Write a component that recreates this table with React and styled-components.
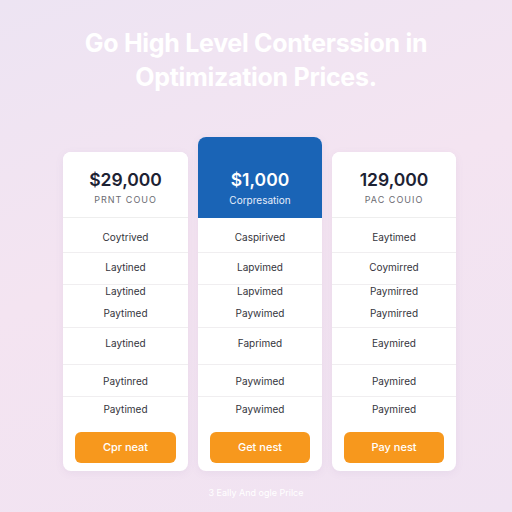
import React from "react";
import styled, { createGlobalStyle } from "styled-components";

const GlobalStyle = createGlobalStyle`
  html, body {
    margin: 0;
    padding: 0;
  }
  body {
    width: 512px;
    height: 512px;
    overflow: hidden;
    font-family: Inter, "Open Sans", "Liberation Sans", sans-serif;
    background: linear-gradient(160deg, #ede4f3 0%, #f4e4f1 45%, #f0e3f2 100%);
  }
`;

// row heights / text offsets, same for every card
const rows = [
  { h: 35, pt: 13, line: true },
  { h: 32, pt: 8, line: true },
  { h: 17, pt: 0, line: false },
  { h: 26, pt: 5, line: true },
  { h: 37, pt: 9, line: true },
  { h: 32, pt: 10, line: true },
  { h: 28, pt: 6, line: false },
];

const plans = [
  {
    price: "$29,000",
    label: "PRNT COUO",
    featured: false,
    width: 125,
    items: ["Coytrived", "Laytined", "Laytined", "Paytimed", "Laytined", "Paytinred", "Paytimed"],
    cta: "Cpr neat",
  },
  {
    price: "$1,000",
    label: "Corpresation",
    featured: true,
    width: 124,
    items: ["Caspirived", "Lapvimed", "Lapvimed", "Paywimed", "Faprimed", "Paywimed", "Paywimed"],
    cta: "Get nest",
  },
  {
    price: "129,000",
    label: "PAC COUIO",
    featured: false,
    width: 124,
    items: ["Eaytimed", "Coymirred", "Paymirred", "Paymirred", "Eaymired", "Paymired", "Paymired"],
    cta: "Pay nest",
  },
];

const Page = styled.div`
  display: flex;
  flex-direction: column;
  align-items: center;
  padding-top: 26px;
`;

const Title = styled.h1`
  margin: 0;
  width: 460px;
  text-align: center;
  color: #ffffff;
  font-size: 25px;
  line-height: 34px;
  font-weight: 700;
  letter-spacing: -0.3px;
`;

const CardRow = styled.div`
  display: flex;
  align-items: flex-end;
  gap: 10px;
  margin-top: 43px;
  padding-left: 7px;
`;

const Card = styled.div`
  width: ${(p) => p.$w}px;
  background: #ffffff;
  border-radius: 8px;
  overflow: hidden;
  box-shadow: 0 2px 8px rgba(120, 90, 150, 0.08);
`;

const Header = styled.div`
  height: ${(p) => (p.$featured ? 81 : 66)}px;
  box-sizing: border-box;
  display: flex;
  flex-direction: column;
  align-items: center;
  justify-content: flex-end;
  padding-bottom: 11px;
  background: ${(p) => (p.$featured ? "#1a64b6" : "#ffffff")};
  border-bottom: 1px solid ${(p) => (p.$featured ? "#1a64b6" : "#eeeeee")};
`;

const Price = styled.div`
  font-size: 17.5px;
  line-height: 22px;
  font-weight: 600;
  color: ${(p) => (p.$featured ? "#ffffff" : "#1d2233")};
`;

const PlanLabel = styled.div`
  margin-top: 3px;
  font-size: ${(p) => (p.$featured ? 10 : 9)}px;
  line-height: 12px;
  letter-spacing: ${(p) => (p.$featured ? 0 : 1)}px;
  color: ${(p) => (p.$featured ? "#e6eefa" : "#6b6b72")};
`;

const Row = styled.div`
  height: ${(p) => p.$h}px;
  box-sizing: border-box;
  padding-top: ${(p) => p.$pt}px;
  text-align: center;
  font-size: 10px;
  line-height: 12px;
  color: #34343c;
  border-bottom: 1px solid ${(p) => (p.$line ? "#f0eef0" : "transparent")};
`;

const Footer = styled.div`
  padding: 7px 12px 8px;
`;

const Button = styled.button`
  width: 100%;
  height: 31px;
  border: none;
  border-radius: 6px;
  background: #f7981d;
  color: #ffffff;
  font-family: inherit;
  font-size: 11px;
  font-weight: 500;
  padding-bottom: 2px;
  cursor: pointer;
`;

const Note = styled.div`
  margin-top: 16px;
  font-size: 9px;
  color: #ffffff;
`;

export default function App() {
  return (
    <>
      <GlobalStyle />
      <Page>
        <Title>Go High Level Conterssion in Optimization Prices.</Title>
        <CardRow>
          {plans.map((plan) => (
            <Card key={plan.price} $w={plan.width}>
              <Header $featured={plan.featured}>
                <Price $featured={plan.featured}>{plan.price}</Price>
                <PlanLabel $featured={plan.featured}>{plan.label}</PlanLabel>
              </Header>
              {plan.items.map((item, i) => (
                <Row key={i} $h={rows[i].h} $pt={rows[i].pt} $line={rows[i].line}>
                  {item}
                </Row>
              ))}
              <Footer>
                <Button>{plan.cta}</Button>
              </Footer>
            </Card>
          ))}
        </CardRow>
        <Note>3 Eally And ogle Prilce</Note>
      </Page>
    </>
  );
}
